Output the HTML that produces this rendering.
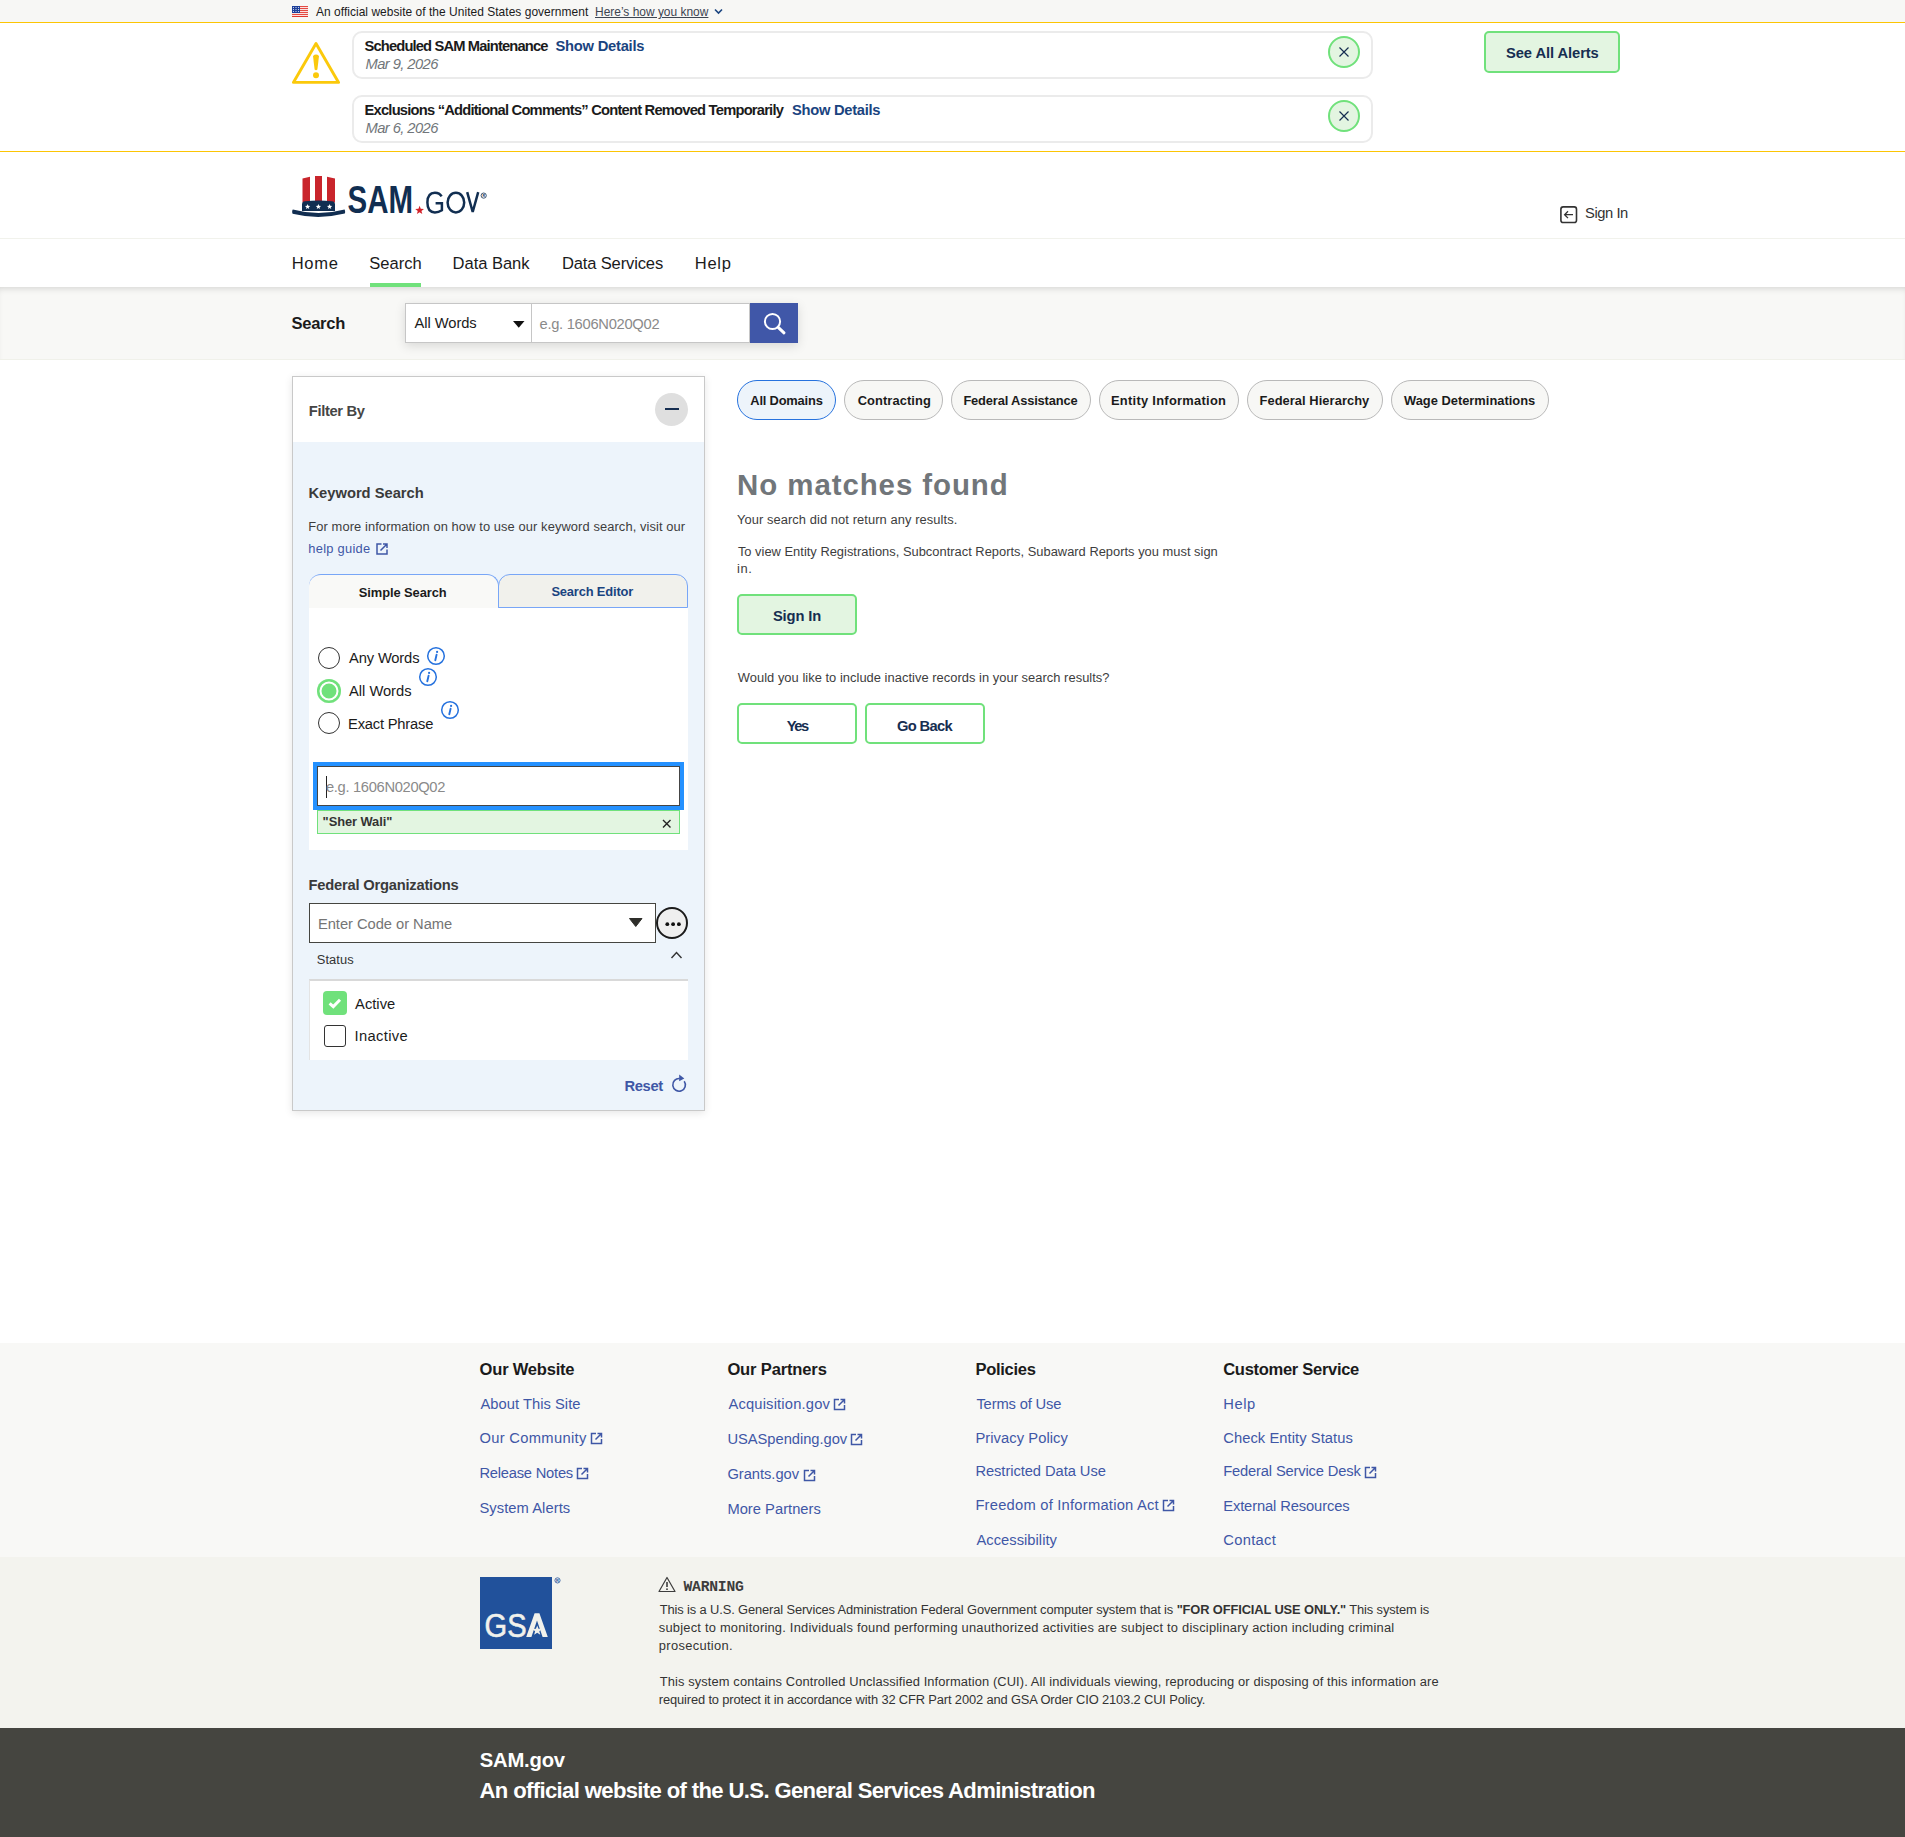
<!DOCTYPE html>
<html><head><meta charset="utf-8"><title>SAM.gov | Search</title>
<style>
html,body{margin:0;padding:0;}
body{width:1905px;height:1837px;position:relative;overflow:hidden;background:#fff;font-family:"Liberation Sans",sans-serif;}
.a{position:absolute;}
.t{position:absolute;line-height:1;white-space:nowrap;font-family:"Liberation Sans",sans-serif;}
.m{font-family:"Liberation Mono",monospace;}
b{font-weight:700;}
</style></head><body>
<div class="a" style="left:0px;top:0px;width:1905px;height:22px;background:#f7f7f5"></div>
<svg class="a" style="left:292px;top:6px" width="16" height="11" viewBox="0 0 16 11"><rect width="16" height="11" fill="#fff"/><rect y="0.1" width="16" height="1.05" fill="#e0372e"/><rect y="2.1" width="16" height="1.05" fill="#e0372e"/><rect y="4.1" width="16" height="1.05" fill="#e0372e"/><rect y="6.1" width="16" height="1.05" fill="#e0372e"/><rect y="8.1" width="16" height="1.05" fill="#e0372e"/><rect y="10.0" width="16" height="1.05" fill="#e0372e"/><rect width="8" height="7" fill="#1d3f9a"/><circle cx="1.4" cy="1.5" r="0.55" fill="#fff"/><circle cx="4.0" cy="1.5" r="0.55" fill="#fff"/><circle cx="6.6" cy="1.5" r="0.55" fill="#fff"/><circle cx="1.4" cy="3.5" r="0.55" fill="#fff"/><circle cx="4.0" cy="3.5" r="0.55" fill="#fff"/><circle cx="6.6" cy="3.5" r="0.55" fill="#fff"/><circle cx="1.4" cy="5.5" r="0.55" fill="#fff"/><circle cx="4.0" cy="5.5" r="0.55" fill="#fff"/><circle cx="6.6" cy="5.5" r="0.55" fill="#fff"/></svg>
<div class="t" style="left:316px;top:7px;font-size:11.96px;letter-spacing:0.04px;color:#1b1b1b;">An official website of the United States government</div>
<div class="t" style="left:595px;top:7px;font-size:11.96px;letter-spacing:0.0px;color:#3d4551;text-decoration:underline;text-underline-offset:1px;">Here&#8217;s how you know</div>
<svg class="a" style="left:714px;top:8px" width="9" height="7" viewBox="0 0 9 7"><path d="M1 1.5 L4.5 5 L8 1.5" fill="none" stroke="#1a4480" stroke-width="1.6"/></svg>
<div class="a" style="left:0px;top:22px;width:1905px;height:1px;background:#fcc504"></div>
<div class="a" style="left:0px;top:151px;width:1905px;height:1px;background:#fcc504"></div>
<svg class="a" style="left:290px;top:40px" width="52" height="46" viewBox="0 0 52 46"><path d="M26 3.6 L48.6 42.4 L3.4 42.4 Z" fill="none" stroke="#fbc90b" stroke-width="2.9" stroke-linejoin="round"/><path d="M23 16 Q26 13.2 29 16 L27.4 29.5 Q26 31 24.6 29.5 Z" fill="#fbc90b"/><circle cx="26" cy="35.2" r="3" fill="#fbc90b"/></svg>
<div class="a" style="left:352px;top:31px;width:1017px;height:44px;border:2px solid #ebebeb;border-radius:10px"></div>
<div class="a" style="left:352px;top:95px;width:1017px;height:44px;border:2px solid #ebebeb;border-radius:10px"></div>
<div class="a" style="left:1328px;top:36px;width:28px;height:28px;border:2px solid #70e17b;border-radius:50%;background:#e3f5e1"></div>
<svg class="a" style="left:1338px;top:46px" width="12" height="12" viewBox="0 0 12 12"><path d="M1.5 1.5 L10.5 10.5 M10.5 1.5 L1.5 10.5" stroke="#162e51" stroke-width="1.2" fill="none"/></svg>
<div class="a" style="left:1328px;top:100px;width:28px;height:28px;border:2px solid #70e17b;border-radius:50%;background:#e3f5e1"></div>
<svg class="a" style="left:1338px;top:110px" width="12" height="12" viewBox="0 0 12 12"><path d="M1.5 1.5 L10.5 10.5 M10.5 1.5 L1.5 10.5" stroke="#162e51" stroke-width="1.2" fill="none"/></svg>
<div class="t" style="left:364.5px;top:39px;font-size:14.72px;letter-spacing:-0.854px;color:#1b1b1b;font-weight:700;">Scheduled SAM Maintenance</div>
<div class="t" style="left:555.5px;top:39px;font-size:14.72px;letter-spacing:-0.236px;color:#1a4480;font-weight:700;">Show Details</div>
<div class="t" style="left:365.5px;top:57px;font-size:14.72px;letter-spacing:-0.57px;color:#71767a;font-style:italic;">Mar 9, 2026</div>
<div class="t" style="left:364.5px;top:103px;font-size:14.72px;letter-spacing:-0.788px;color:#1b1b1b;font-weight:700;">Exclusions &#8220;Additional Comments&#8221; Content Removed Temporarily</div>
<div class="t" style="left:792px;top:103px;font-size:14.72px;letter-spacing:-0.282px;color:#1a4480;font-weight:700;">Show Details</div>
<div class="t" style="left:365.5px;top:121px;font-size:14.72px;letter-spacing:-0.57px;color:#71767a;font-style:italic;">Mar 6, 2026</div>
<div class="a" style="left:1484px;top:31px;width:132px;height:38px;border:2px solid #70e17b;border-radius:5px;background:#e3f5e1"></div>
<div class="t" style="left:1506px;top:46px;font-size:14.72px;letter-spacing:-0.077px;color:#162e51;font-weight:700;">See All Alerts</div>
<svg class="a" style="left:292px;top:176px" width="200" height="42" viewBox="0 0 200 42">
<path d="M10.5 2.6 L18 0.7 L18 26.5 L10.5 26.5 Z" fill="#c9252c"/>
<path d="M23 0 L30 0 L30 26.5 L23 26.5 Z" fill="#c9252c"/>
<path d="M35 0.7 L43 2.6 L43 26.5 L35 26.5 Z" fill="#c9252c"/>
<path d="M10 28.5 Q10 25.3 13 25.2 Q26.5 23.6 40 25.2 Q43 25.3 43 28.5 L43 35 L10 35 Z" fill="#112e51"/>
<path d="M0.8 33.6 Q26.5 40.6 52.6 33.6 Q53.6 35.8 52.8 37.6 Q26.5 44.2 0.6 37.8 Q-0.4 35.6 0.8 33.6 Z" fill="#112e51"/>
<polygon points="15.60,28.00 16.29,29.85 18.26,29.93 16.72,31.16 17.25,33.07 15.60,31.98 13.95,33.07 14.48,31.16 12.94,29.93 14.91,29.85" fill="#fff"/><polygon points="26.40,28.00 27.09,29.85 29.06,29.93 27.52,31.16 28.05,33.07 26.40,31.98 24.75,33.07 25.28,31.16 23.74,29.93 25.71,29.85" fill="#fff"/><polygon points="37.60,28.00 38.29,29.85 40.26,29.93 38.72,31.16 39.25,33.07 37.60,31.98 35.95,33.07 36.48,31.16 34.94,29.93 36.91,29.85" fill="#fff"/><text x="55.6" y="37" font-family="Liberation Sans" font-weight="700" font-size="39" textLength="65.5" lengthAdjust="spacingAndGlyphs" fill="#112e51">SAM</text><polygon points="127.60,29.70 128.74,32.74 131.97,32.88 129.44,34.90 130.30,38.02 127.60,36.23 124.90,38.02 125.76,34.90 123.23,32.88 126.46,32.74" fill="#d3222a"/><g fill="none" stroke="#112e51" stroke-width="2.5"><path d="M149.6 20.4 Q147.6 16.8 142.9 16.8 Q135.4 16.8 135.4 26.6 Q135.4 36.4 142.9 36.4 Q146.6 36.4 149.9 34.2 L149.9 27.3 L143.6 27.3"/><ellipse cx="163.9" cy="26.6" rx="8.3" ry="9.8"/><path d="M175.2 16.2 L180.7 36 L186.2 16.2" stroke-linejoin="bevel"/></g><circle cx="191.7" cy="19.6" r="2.6" fill="none" stroke="#112e51" stroke-width="0.8"/><text x="190.4" y="21" font-family="Liberation Sans" font-size="3.6" font-weight="700" fill="#112e51">R</text></svg>
<svg class="a" style="left:1559px;top:205px" width="20" height="20" viewBox="0 0 20 20"><rect x="1.9" y="1.9" width="15.6" height="15.6" rx="2.3" fill="none" stroke="#333" stroke-width="1.6"/><path d="M14 9.7 L5.8 9.7 M9 6.3 L5.6 9.7 L9 13.1" fill="none" stroke="#333" stroke-width="1.3"/></svg>
<div class="t" style="left:1585.1px;top:206px;font-size:14.72px;letter-spacing:-0.449px;color:#333333;">Sign In</div>
<div class="a" style="left:0px;top:238px;width:1905px;height:1px;background:#f1f2ec"></div>
<div class="t" style="left:291.7px;top:256px;font-size:16.56px;letter-spacing:0.733px;color:#1b1b1b;">Home</div>
<div class="t" style="left:369.2px;top:256px;font-size:16.56px;letter-spacing:0.04px;color:#1b1b1b;">Search</div>
<div class="t" style="left:452.6px;top:256px;font-size:16.56px;letter-spacing:-0.05px;color:#1b1b1b;">Data Bank</div>
<div class="t" style="left:561.9px;top:256px;font-size:16.56px;letter-spacing:-0.142px;color:#1b1b1b;">Data Services</div>
<div class="t" style="left:694.8px;top:256px;font-size:16.56px;letter-spacing:0.7px;color:#1b1b1b;">Help</div>
<div class="a" style="left:370px;top:283px;width:51px;height:4px;background:#70e17b"></div>
<div class="a" style="left:0px;top:287px;width:1905px;height:72px;background:#f8f8f6;box-shadow:inset 0 5px 7px -4px rgba(0,0,0,0.16)"></div>
<div class="a" style="left:0px;top:359px;width:1905px;height:1px;background:#f0f1ea"></div>
<div class="t" style="left:291.5px;top:316px;font-size:16.56px;letter-spacing:-0.28px;color:#1b1b1b;font-weight:700;">Search</div>
<div class="a" style="left:405px;top:303px;width:393px;height:40px;box-shadow:0 3px 10px rgba(0,0,0,0.13)"></div>
<div class="a" style="left:405px;top:303px;width:127px;height:40px;background:#fff;border:1px solid #c6c6c6;box-sizing:border-box"></div>
<div class="a" style="left:531px;top:303px;width:219px;height:40px;background:#fff;border:1px solid #c6c6c6;box-sizing:border-box"></div>
<div class="t" style="left:414.5px;top:316px;font-size:14.72px;letter-spacing:-0.061px;color:#1b1b1b;">All Words</div>
<svg class="a" style="left:512px;top:320px" width="14" height="9" viewBox="0 0 14 9"><path d="M1 1 L12.5 1 L6.75 7.8 Z" fill="#111"/></svg>
<div class="t" style="left:539.5px;top:317px;font-size:14.72px;letter-spacing:-0.287px;color:#8a8a8a;">e.g. 1606N020Q02</div>
<div class="a" style="left:750px;top:303px;width:48px;height:40px;background:#4057a8"></div>
<svg class="a" style="left:760px;top:310px" width="30" height="30" viewBox="0 0 30 30"><circle cx="12.5" cy="11.5" r="7.6" fill="none" stroke="#fff" stroke-width="2"/><path d="M18.2 17.3 L24 22.8" stroke="#fff" stroke-width="3" stroke-linecap="round"/></svg>
<div class="a" style="left:292px;top:376px;width:413px;height:735px;background:#fff;border:1px solid #c9c9c9;box-sizing:border-box;box-shadow:0 2px 8px rgba(0,0,0,0.10)"></div>
<div class="a" style="left:293px;top:442px;width:411px;height:668px;background:#edf4fb"></div>
<div class="t" style="left:308.8px;top:404px;font-size:14.72px;letter-spacing:-0.35px;color:#454545;font-weight:700;">Filter By</div>
<div class="a" style="left:655px;top:393px;width:33px;height:33px;background:#dfdfdf;border-radius:50%"></div>
<div class="a" style="left:665px;top:408.3px;width:14px;height:1.8px;background:#162e51"></div>
<div class="t" style="left:308.5px;top:486px;font-size:14.72px;letter-spacing:-0.008px;color:#3a3a3a;font-weight:700;">Keyword Search</div>
<div class="t" style="left:308.3px;top:521px;font-size:12.88px;letter-spacing:0.098px;color:#3d3d3d;">For more information on how to use our keyword search, visit our</div>
<div class="t" style="left:308.3px;top:543px;font-size:12.88px;letter-spacing:0.278px;color:#3f57a6;">help guide</div>
<svg class="a" style="left:373px;top:541px" width="16" height="16" viewBox="0 0 16 16"><path d="M8.5 3 L4 3 L4 13 L14 13 L14 8.5" fill="none" stroke="#3f57a6" stroke-width="1.5"/><path d="M7.5 9.5 L13.5 3.5 M10 3 L14 3 L14 7" fill="none" stroke="#3f57a6" stroke-width="1.5"/></svg>
<div class="a" style="left:309px;top:574px;width:190px;height:34px;background:#f9f9f7;border:1.5px solid #78a6f7;border-bottom:none;border-left:none;border-radius:12px 12px 0 0;box-sizing:border-box"></div>
<div class="a" style="left:498px;top:574px;width:190px;height:34px;background:#f1f1ec;border:1.5px solid #78a6f7;border-radius:12px 12px 0 0;box-sizing:border-box"></div>
<div class="t" style="left:358.8px;top:587px;font-size:12.88px;letter-spacing:-0.075px;color:#1b1b1b;font-weight:700;">Simple Search</div>
<div class="t" style="left:551.4px;top:586px;font-size:12.88px;letter-spacing:-0.15px;color:#1a4480;font-weight:700;">Search Editor</div>
<div class="a" style="left:309px;top:608px;width:379px;height:242px;background:#fff"></div>
<div class="a" style="left:318px;top:647px;width:22px;height:22px;border:1.8px solid #333;border-radius:50%;box-sizing:border-box"></div>
<div class="a" style="left:317px;top:679px;width:24px;height:24px;background:#70e17b;border-radius:50%;box-shadow:inset 0 0 0 2.5px #70e17b, inset 0 0 0 4.5px #fff"></div>
<div class="a" style="left:318px;top:712px;width:22px;height:22px;border:1.8px solid #333;border-radius:50%;box-sizing:border-box"></div>
<div class="t" style="left:349.1px;top:651px;font-size:14.72px;letter-spacing:-0.164px;color:#1b1b1b;">Any Words</div>
<div class="t" style="left:349.1px;top:684px;font-size:14.72px;letter-spacing:-0.039px;color:#1b1b1b;">All Words</div>
<div class="t" style="left:348.1px;top:717px;font-size:14.72px;letter-spacing:-0.209px;color:#1b1b1b;">Exact Phrase</div>
<svg class="a" style="left:426px;top:646px" width="20" height="20" viewBox="0 0 20 20"><circle cx="10" cy="10" r="8.3" fill="none" stroke="#2672de" stroke-width="1.5"/><path d="M10.6 8.6 L9.3 14.3" stroke="#2672de" stroke-width="1.9" stroke-linecap="round"/><circle cx="11.1" cy="5.9" r="1.1" fill="#2672de"/></svg>
<svg class="a" style="left:418px;top:667px" width="20" height="20" viewBox="0 0 20 20"><circle cx="10" cy="10" r="8.3" fill="none" stroke="#2672de" stroke-width="1.5"/><path d="M10.6 8.6 L9.3 14.3" stroke="#2672de" stroke-width="1.9" stroke-linecap="round"/><circle cx="11.1" cy="5.9" r="1.1" fill="#2672de"/></svg>
<svg class="a" style="left:440px;top:700px" width="20" height="20" viewBox="0 0 20 20"><circle cx="10" cy="10" r="8.3" fill="none" stroke="#2672de" stroke-width="1.5"/><path d="M10.6 8.6 L9.3 14.3" stroke="#2672de" stroke-width="1.9" stroke-linecap="round"/><circle cx="11.1" cy="5.9" r="1.1" fill="#2672de"/></svg>
<div class="a" style="left:313px;top:762px;width:371px;height:48px;background:#2491ff"></div>
<div class="a" style="left:317px;top:766px;width:363px;height:40px;background:#fff;border:1.6px solid #454545;box-sizing:border-box"></div>
<div class="a" style="left:326px;top:776px;width:1.3px;height:22px;background:#222"></div>
<div class="t" style="left:326px;top:780px;font-size:14.72px;letter-spacing:-0.333px;color:#8a8a8a;">e.g. 1606N020Q02</div>
<div class="a" style="left:317px;top:810px;width:363px;height:24px;background:#e3f5e1;border:1.3px solid #70e17b;box-sizing:border-box"></div>
<div class="t" style="left:322.6px;top:816px;font-size:12.88px;letter-spacing:-0.07px;color:#333333;font-weight:700;">&quot;Sher Wali&quot;</div>
<svg class="a" style="left:661px;top:818px" width="12" height="12" viewBox="0 0 12 12"><path d="M2 2 L9.5 9.5 M9.5 2 L2 9.5" stroke="#222" stroke-width="1.4"/></svg>
<div class="t" style="left:308.5px;top:878px;font-size:14.72px;letter-spacing:-0.22px;color:#3a3a3a;font-weight:700;">Federal Organizations</div>
<div class="a" style="left:309px;top:903px;width:347px;height:40px;background:#fff;border:1.6px solid #454540;box-sizing:border-box"></div>
<div class="t" style="left:317.9px;top:917px;font-size:14.72px;letter-spacing:-0.036px;color:#757575;">Enter Code or Name</div>
<svg class="a" style="left:628px;top:917px" width="16" height="12" viewBox="0 0 16 12"><path d="M1.5 1.5 L14 1.5 L7.75 9.5 Z" fill="#2e2e2a" stroke="#2e2e2a" stroke-width="1" stroke-linejoin="round"/></svg>
<div class="a" style="left:656px;top:907px;width:32px;height:32px;background:#efefef;border:2.3px solid #1b1b1b;border-radius:50%;box-sizing:border-box"></div>
<svg class="a" style="left:664px;top:920px" width="18" height="8" viewBox="0 0 18 8"><circle cx="3.3" cy="4.2" r="1.9" fill="#111"/><circle cx="9.1" cy="4.2" r="1.9" fill="#111"/><circle cx="14.899999999999999" cy="4.2" r="1.9" fill="#111"/></svg>
<div class="t" style="left:316.8px;top:954px;font-size:12.88px;letter-spacing:0.06px;color:#333333;">Status</div>
<svg class="a" style="left:668px;top:948px" width="17" height="14" viewBox="0 0 17 14"><path d="M3.5 10 L8.5 4.5 L13.5 10" fill="none" stroke="#333" stroke-width="1.4"/></svg>
<div class="a" style="left:309px;top:979px;width:379px;height:81px;background:#fff;border-top:2px solid #d9d9d9;border-left:1px solid #e4e4e4;box-sizing:border-box"></div>
<div class="a" style="left:323px;top:991px;width:24px;height:24px;background:#70e17b;border-radius:4px"></div>
<svg class="a" style="left:323px;top:991px" width="24" height="24" viewBox="0 0 24 24"><path d="M6.6 12.3 L10.3 15.6 L17 8.8" fill="none" stroke="#fff" stroke-width="3"/></svg>
<div class="a" style="left:324px;top:1025px;width:22px;height:22px;border:1.6px solid #333;border-radius:3px;box-sizing:border-box;background:#fff"></div>
<div class="t" style="left:355.1px;top:997px;font-size:14.72px;letter-spacing:0.0px;color:#1b1b1b;">Active</div>
<div class="t" style="left:354.5px;top:1029px;font-size:14.72px;letter-spacing:0.357px;color:#1b1b1b;">Inactive</div>
<div class="t" style="left:624.5px;top:1079px;font-size:14.72px;letter-spacing:-0.35px;color:#3f57a6;font-weight:700;">Reset</div>
<svg class="a" style="left:670px;top:1073px" width="20" height="22" viewBox="0 0 20 22"><path d="M14.2 8.2 A6.3 6.3 0 1 1 9.8 5.6" fill="none" stroke="#3f57a6" stroke-width="1.6"/><path d="M9.2 1.6 L14.3 5.4 L9.2 8.2 Z" fill="#3f57a6"/></svg>
<div class="a" style="left:737px;top:380px;width:99px;height:40px;background:#edf4fb;border:1.5px solid #2672de;border-radius:20px;box-sizing:border-box"></div>
<div class="t" style="left:750.3px;top:395px;font-size:12.88px;letter-spacing:-0.19px;color:#1b1b1b;font-weight:700;">All Domains</div>
<div class="a" style="left:844px;top:380px;width:99px;height:40px;background:#f7f7f5;border:1px solid #b9b9b9;border-radius:20px;box-sizing:border-box"></div>
<div class="t" style="left:857.7px;top:395px;font-size:12.88px;letter-spacing:0.09px;color:#1b1b1b;font-weight:700;">Contracting</div>
<div class="a" style="left:951px;top:380px;width:140px;height:40px;background:#f7f7f5;border:1px solid #b9b9b9;border-radius:20px;box-sizing:border-box"></div>
<div class="t" style="left:963.4px;top:395px;font-size:12.88px;letter-spacing:-0.159px;color:#1b1b1b;font-weight:700;">Federal Assistance</div>
<div class="a" style="left:1099px;top:380px;width:140px;height:40px;background:#f7f7f5;border:1px solid #b9b9b9;border-radius:20px;box-sizing:border-box"></div>
<div class="t" style="left:1111px;top:395px;font-size:12.88px;letter-spacing:0.282px;color:#1b1b1b;font-weight:700;">Entity Information</div>
<div class="a" style="left:1247px;top:380px;width:136px;height:40px;background:#f7f7f5;border:1px solid #b9b9b9;border-radius:20px;box-sizing:border-box"></div>
<div class="t" style="left:1259.5px;top:395px;font-size:12.88px;letter-spacing:0.062px;color:#1b1b1b;font-weight:700;">Federal Hierarchy</div>
<div class="a" style="left:1391px;top:380px;width:158px;height:40px;background:#f7f7f5;border:1px solid #b9b9b9;border-radius:20px;box-sizing:border-box"></div>
<div class="t" style="left:1404px;top:395px;font-size:12.88px;letter-spacing:0.0px;color:#1b1b1b;font-weight:700;">Wage Determinations</div>
<div class="t" style="left:737.1px;top:470px;font-size:29.44px;letter-spacing:0.926px;color:#71767a;font-weight:700;">No matches found</div>
<div class="t" style="left:736.9px;top:514px;font-size:12.88px;letter-spacing:0.088px;color:#3d3d3d;">Your search did not return any results.</div>
<div class="t" style="left:737.9px;top:546px;font-size:12.88px;letter-spacing:0.014px;color:#3d3d3d;">To view Entity Registrations, Subcontract Reports, Subaward Reports you must sign</div>
<div class="t" style="left:736.9px;top:563px;font-size:12.88px;letter-spacing:0.65px;color:#3d3d3d;">in.</div>
<div class="t" style="left:737.8px;top:672px;font-size:12.88px;letter-spacing:0.041px;color:#3d3d3d;">Would you like to include inactive records in your search results?</div>
<div class="a" style="left:737px;top:594px;width:120px;height:41px;background:#e3f5e1;border:2.3px solid #70e17b;border-radius:5px;box-sizing:border-box"></div>
<div class="t" style="left:772.9px;top:609px;font-size:14.72px;letter-spacing:-0.099px;color:#162e51;font-weight:700;">Sign In</div>
<div class="a" style="left:737px;top:703px;width:120px;height:41px;background:#fff;border:2.3px solid #70e17b;border-radius:5px;box-sizing:border-box"></div>
<div class="a" style="left:865px;top:703px;width:120px;height:41px;background:#fff;border:2.3px solid #70e17b;border-radius:5px;box-sizing:border-box"></div>
<div class="t" style="left:786.7px;top:719px;font-size:14.72px;letter-spacing:-1.5px;color:#162e51;font-weight:700;">Yes</div>
<div class="t" style="left:897px;top:719px;font-size:14.72px;letter-spacing:-0.667px;color:#162e51;font-weight:700;">Go Back</div>
<div class="a" style="left:0px;top:1343px;width:1905px;height:214px;background:#f8f8f6"></div>
<div class="a" style="left:0px;top:1557px;width:1905px;height:171px;background:#f3f3ee"></div>
<div class="a" style="left:0px;top:1728px;width:1905px;height:109px;background:#454540"></div>
<div class="t" style="left:479.6px;top:1362px;font-size:16.56px;letter-spacing:-0.22px;color:#1b1b1b;font-weight:700;">Our Website</div>
<div class="t" style="left:727.4px;top:1362px;font-size:16.56px;letter-spacing:-0.155px;color:#1b1b1b;font-weight:700;">Our Partners</div>
<div class="t" style="left:975.4px;top:1362px;font-size:16.56px;letter-spacing:-0.3px;color:#1b1b1b;font-weight:700;">Policies</div>
<div class="t" style="left:1223.2px;top:1362px;font-size:16.56px;letter-spacing:-0.306px;color:#1b1b1b;font-weight:700;">Customer Service</div>
<div class="t" style="left:480.4px;top:1397px;font-size:14.72px;letter-spacing:0.036px;color:#3f57a6;">About This Site</div>
<div class="t" style="left:479.4px;top:1431px;font-size:14.72px;letter-spacing:0.317px;color:#3f57a6;">Our Community</div>
<div class="t" style="left:479.4px;top:1466px;font-size:14.72px;letter-spacing:-0.226px;color:#3f57a6;">Release Notes</div>
<div class="t" style="left:479.4px;top:1501px;font-size:14.72px;letter-spacing:0.067px;color:#3f57a6;">System Alerts</div>
<div class="t" style="left:728.4px;top:1397px;font-size:14.72px;letter-spacing:0.179px;color:#3f57a6;">Acquisition.gov</div>
<div class="t" style="left:727.4px;top:1432px;font-size:14.72px;letter-spacing:-0.036px;color:#3f57a6;">USASpending.gov</div>
<div class="t" style="left:727.4px;top:1467px;font-size:14.72px;letter-spacing:-0.033px;color:#3f57a6;">Grants.gov</div>
<div class="t" style="left:727.4px;top:1502px;font-size:14.72px;letter-spacing:0.016px;color:#3f57a6;">More Partners</div>
<div class="t" style="left:976.4px;top:1397px;font-size:14.72px;letter-spacing:-0.145px;color:#3f57a6;">Terms of Use</div>
<div class="t" style="left:975.4px;top:1431px;font-size:14.72px;letter-spacing:0.069px;color:#3f57a6;">Privacy Policy</div>
<div class="t" style="left:975.4px;top:1464px;font-size:14.72px;letter-spacing:-0.067px;color:#3f57a6;">Restricted Data Use</div>
<div class="t" style="left:975.4px;top:1498px;font-size:14.72px;letter-spacing:0.232px;color:#3f57a6;">Freedom of Information Act</div>
<div class="t" style="left:976.4px;top:1533px;font-size:14.72px;letter-spacing:0.033px;color:#3f57a6;">Accessibility</div>
<div class="t" style="left:1223.2px;top:1397px;font-size:14.72px;letter-spacing:0.6px;color:#3f57a6;">Help</div>
<div class="t" style="left:1223.2px;top:1431px;font-size:14.72px;letter-spacing:0.067px;color:#3f57a6;">Check Entity Status</div>
<div class="t" style="left:1223.2px;top:1464px;font-size:14.72px;letter-spacing:-0.163px;color:#3f57a6;">Federal Service Desk</div>
<div class="t" style="left:1223.2px;top:1499px;font-size:14.72px;letter-spacing:-0.118px;color:#3f57a6;">External Resources</div>
<div class="t" style="left:1223.2px;top:1533px;font-size:14.72px;letter-spacing:0.317px;color:#3f57a6;">Contact</div>
<svg class="a" style="left:589.5px;top:1432px" width="13" height="13" viewBox="0 0 13 13"><path d="M6 1.5 L1.5 1.5 L1.5 11.5 L11.5 11.5 L11.5 7" fill="none" stroke="#3f57a6" stroke-width="1.5"/><path d="M5.5 7.5 L11 2 M7.5 1.5 L11.5 1.5 L11.5 5.5" fill="none" stroke="#3f57a6" stroke-width="1.5"/></svg>
<svg class="a" style="left:576px;top:1467px" width="13" height="13" viewBox="0 0 13 13"><path d="M6 1.5 L1.5 1.5 L1.5 11.5 L11.5 11.5 L11.5 7" fill="none" stroke="#3f57a6" stroke-width="1.5"/><path d="M5.5 7.5 L11 2 M7.5 1.5 L11.5 1.5 L11.5 5.5" fill="none" stroke="#3f57a6" stroke-width="1.5"/></svg>
<svg class="a" style="left:833px;top:1397.5px" width="13" height="13" viewBox="0 0 13 13"><path d="M6 1.5 L1.5 1.5 L1.5 11.5 L11.5 11.5 L11.5 7" fill="none" stroke="#3f57a6" stroke-width="1.5"/><path d="M5.5 7.5 L11 2 M7.5 1.5 L11.5 1.5 L11.5 5.5" fill="none" stroke="#3f57a6" stroke-width="1.5"/></svg>
<svg class="a" style="left:850px;top:1433px" width="13" height="13" viewBox="0 0 13 13"><path d="M6 1.5 L1.5 1.5 L1.5 11.5 L11.5 11.5 L11.5 7" fill="none" stroke="#3f57a6" stroke-width="1.5"/><path d="M5.5 7.5 L11 2 M7.5 1.5 L11.5 1.5 L11.5 5.5" fill="none" stroke="#3f57a6" stroke-width="1.5"/></svg>
<svg class="a" style="left:802.5px;top:1468.5px" width="13" height="13" viewBox="0 0 13 13"><path d="M6 1.5 L1.5 1.5 L1.5 11.5 L11.5 11.5 L11.5 7" fill="none" stroke="#3f57a6" stroke-width="1.5"/><path d="M5.5 7.5 L11 2 M7.5 1.5 L11.5 1.5 L11.5 5.5" fill="none" stroke="#3f57a6" stroke-width="1.5"/></svg>
<svg class="a" style="left:1162px;top:1499px" width="13" height="13" viewBox="0 0 13 13"><path d="M6 1.5 L1.5 1.5 L1.5 11.5 L11.5 11.5 L11.5 7" fill="none" stroke="#3f57a6" stroke-width="1.5"/><path d="M5.5 7.5 L11 2 M7.5 1.5 L11.5 1.5 L11.5 5.5" fill="none" stroke="#3f57a6" stroke-width="1.5"/></svg>
<svg class="a" style="left:1364px;top:1465.5px" width="13" height="13" viewBox="0 0 13 13"><path d="M6 1.5 L1.5 1.5 L1.5 11.5 L11.5 11.5 L11.5 7" fill="none" stroke="#3f57a6" stroke-width="1.5"/><path d="M5.5 7.5 L11 2 M7.5 1.5 L11.5 1.5 L11.5 5.5" fill="none" stroke="#3f57a6" stroke-width="1.5"/></svg>
<svg class="a" style="left:480px;top:1577px" width="82" height="73" viewBox="0 0 82 73"><rect x="0" y="0" width="72" height="72" fill="#21519b"/><text x="4.6" y="60.3" font-family="Liberation Sans" font-weight="400" font-size="33.5" textLength="42" lengthAdjust="spacingAndGlyphs" fill="#f1f1ec" stroke="#f1f1ec" stroke-width="0.6">GS</text><path d="M46.2 60 L54.6 36.2 L59.4 36.2 L67.8 60 L62.6 60 L57 43.5 L51.4 60 Z" fill="#f1f1ec"/><polygon points="57.20,48.40 58.48,51.83 62.15,51.99 59.28,54.27 60.26,57.81 57.20,55.78 54.14,57.81 55.12,54.27 52.25,51.99 55.92,51.83" fill="#f1f1ec"/><circle cx="77.5" cy="3.4" r="2.6" fill="none" stroke="#21519b" stroke-width="0.8"/><text x="76.1" y="4.9" font-family="Liberation Sans" font-size="4" font-weight="700" fill="#21519b">R</text></svg>
<svg class="a" style="left:658px;top:1576px" width="18" height="17" viewBox="0 0 18 17"><path d="M9 1.5 L17 15.5 L1 15.5 Z" fill="none" stroke="#3d3d3d" stroke-width="1.2" stroke-linejoin="round"/><path d="M9 6 L9 11" stroke="#3d3d3d" stroke-width="1.6"/><circle cx="9" cy="13.2" r="0.9" fill="#3d3d3d"/></svg>
<div class="t m" style="left:683.5px;top:1580px;font-size:14.72px;letter-spacing:-0.25px;color:#3d3d3d;font-weight:700;">WARNING</div>
<div class="t" style="left:659.8px;top:1604px;font-size:12.88px;letter-spacing:-0.125px;color:#333333;">This is a U.S. General Services Administration Federal Government computer system that is <b>&quot;FOR OFFICIAL USE ONLY.&quot;</b> This system is</div>
<div class="t" style="left:658.8px;top:1622px;font-size:12.88px;letter-spacing:0.221px;color:#333333;">subject to monitoring. Individuals found performing unauthorized activities are subject to disciplinary action including criminal</div>
<div class="t" style="left:658.8px;top:1640px;font-size:12.88px;letter-spacing:0.327px;color:#333333;">prosecution.</div>
<div class="t" style="left:659.8px;top:1676px;font-size:12.88px;letter-spacing:0.107px;color:#333333;">This system contains Controlled Unclassified Information (CUI). All individuals viewing, reproducing or disposing of this information are</div>
<div class="t" style="left:658.8px;top:1694px;font-size:12.88px;letter-spacing:-0.136px;color:#333333;">required to protect it in accordance with 32 CFR Part 2002 and GSA Order CIO 2103.2 CUI Policy.</div>
<div class="t" style="left:479.7px;top:1750px;font-size:20.24px;letter-spacing:-0.201px;color:#ffffff;font-weight:700;">SAM.gov</div>
<div class="t" style="left:479.5px;top:1780px;font-size:22.08px;letter-spacing:-0.637px;color:#ffffff;font-weight:700;">An official website of the U.S. General Services Administration</div>
</body></html>
